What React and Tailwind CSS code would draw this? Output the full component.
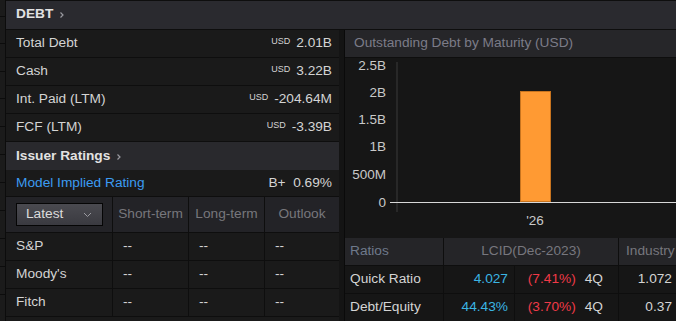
import React from 'react';

const debtRows = [
  { label: 'Total Debt', value: '2.01B' },
  { label: 'Cash', value: '3.22B' },
  { label: 'Int. Paid (LTM)', value: '-204.64M' },
  { label: 'FCF (LTM)', value: '-3.39B' },
];

const agencies = ["S&P", "Moody's", 'Fitch'];

const ratios = [
  { name: 'Quick Ratio', value: '4.027', chg: '(7.41%)', ind: '1.072' },
  { name: 'Debt/Equity', value: '44.43%', chg: '(3.70%)', ind: '0.37' },
];

// y axis ticks for the maturity chart
const ticks = [
  { label: '2.5B', y: 7 },
  { label: '2B', y: 34 },
  { label: '1.5B', y: 61 },
  { label: '1B', y: 88 },
  { label: '500M', y: 116 },
  { label: '0', y: 144 },
];

const Chevron = () => (
  <svg width="6" height="8" viewBox="0 0 6 8" className="ml-[6px] mt-[1px]">
    <path d="M1.5 1.5 L4 4 L1.5 6.5" stroke="#9a9aa0" strokeWidth="1.2" fill="none" />
  </svg>
);

const MaturityChart = () => (
  <svg width="331" height="180" viewBox="0 0 331 180" className="overflow-visible">
    <line x1="52" y1="4" x2="52" y2="154" stroke="#3a3a3a" strokeWidth="1" />
    {ticks.map(t => (
      <text key={t.label} x="41" y={t.y + 5} textAnchor="end" fill="#c9c9c9" fontSize="13.5" fontFamily="Liberation Sans, Arial, sans-serif">
        {t.label}
      </text>
    ))}
    <rect x="175.5" y="33.5" width="30" height="110" fill="#ff9a33" stroke="#c8741f" strokeWidth="1" />
    <line x1="45" y1="144.5" x2="331" y2="144.5" stroke="#d8d8d8" strokeWidth="1" />
    <text x="190" y="167" textAnchor="middle" fill="#c9c9c9" fontSize="13.5" fontFamily="Liberation Sans, Arial, sans-serif">'26</text>
  </svg>
);

export default function App() {
  return (
    <div className="w-[676px] h-[321px] bg-[#141414] flex overflow-hidden text-[13.7px] text-[#d4d4d4] font-['Liberation_Sans',Arial,sans-serif]">
      {/* neighbouring panel edge */}
      <div className="w-[7px] flex flex-col bg-[#1b1b1b]">
        {[17, 27, 28, 27, 28, 28, 28, 28, 28, 28, 28].map((h, i) => (
          <div key={i} className="border-b border-[#0c0c0c]" style={{ height: h }} />
        ))}
      </div>

      <div className="flex-1 flex flex-col border-l border-[#0c0c0c]">
        <div className="h-[30px] shrink-0 bg-[#2a2a2f] border-t border-b border-[#0e0e0e] flex items-center pl-[10px] pb-[1px] text-[#e2e2e2] font-bold">
          DEBT
          <Chevron />
        </div>

        <div className="flex flex-1">
          {/* left column */}
          <div className="w-[333px] flex flex-col bg-[#1a1a1a]">
            {debtRows.map(r => (
              <div key={r.label} className="h-[28px] flex items-center justify-between pl-[10px] pr-[7px] border-b border-[#0e0e0e]">
                <span>{r.label}</span>
                <span className="flex items-baseline">
                  <span className="text-[9px] mr-[6px] relative -top-[3px]">USD</span>
                  {r.value}
                </span>
              </div>
            ))}

            <div className="h-[28px] bg-[#29292d] flex items-center pl-[10px] text-[#e2e2e2] font-bold">
              Issuer Ratings
              <Chevron />
            </div>
            <div className="h-[27px] flex items-center justify-between pl-[10px] pr-[7px] border-b border-[#0e0e0e]">
              <span className="text-[#3c9cf2]">Model Implied Rating</span>
              <span>B+&nbsp;&nbsp;0.69%</span>
            </div>

            <div className="h-[36px] flex bg-[#232327] border-b border-[#0e0e0e]">
              <div className="w-[107px] flex items-center pl-[10px] border-r border-[#0e0e0e]">
                <div className="w-[87px] h-[23px] flex items-center justify-between pl-[9px] pr-[10px] border border-[#050505] bg-gradient-to-b from-[#4a4a50] to-[#3a3a40] text-[#dcdcdc]">
                  Latest
                  <svg width="9" height="6" viewBox="0 0 9 6">
                    <path d="M1 1 L4.5 4.5 L8 1" stroke="#9a9aa0" strokeWidth="1" fill="none" />
                  </svg>
                </div>
              </div>
              {['Short-term', 'Long-term', 'Outlook'].map((h, i) => (
                <div key={h} className={`${i === 2 ? 'flex-1' : 'w-[76px] border-r border-[#0e0e0e]'} flex items-center justify-center text-[#77777c] whitespace-nowrap`}>
                  {h}
                </div>
              ))}
            </div>

            {agencies.map(a => (
              <div key={a} className="h-[28px] flex border-b border-[#0e0e0e]">
                <div className="w-[107px] flex items-center pl-[10px] border-r border-[#0e0e0e]">{a}</div>
                <div className="w-[76px] flex items-center pl-[10px] border-r border-[#0e0e0e]">--</div>
                <div className="w-[76px] flex items-center pl-[10px] border-r border-[#0e0e0e]">--</div>
                <div className="flex-1 flex items-center pl-[10px]">--</div>
              </div>
            ))}
          </div>

          {/* right column */}
          <div className="flex-1 ml-[5px] flex flex-col bg-[#161616] border-l border-[#0a0a0a]">
            <div className="h-[28px] bg-[#262629] flex items-center pl-[9px] text-[#7c7c88] border-b border-[#0e0e0e] whitespace-nowrap">
              Outstanding Debt by Maturity (USD)
            </div>
            <div className="h-[180px]">
              <MaturityChart />
            </div>
            <div className="h-[28px] flex bg-[#252528] border-b border-[#0e0e0e] text-[#77777e]">
              <div className="w-[99px] flex items-center pl-[5px] text-[#6f7a8c] border-r border-[#0e0e0e]">Ratios</div>
              <div className="w-[175px] flex items-center justify-center border-r border-[#0e0e0e]">LCID(Dec-2023)</div>
              <div className="flex-1 flex items-center pl-[7px] whitespace-nowrap">Industry</div>
            </div>
            {ratios.map(r => (
              <div key={r.name} className="h-[28px] flex border-b border-[#0e0e0e]">
                <div className="w-[99px] flex items-center pl-[5px] border-r border-[#0e0e0e] whitespace-nowrap">{r.name}</div>
                <div className="w-[71px] flex items-center justify-end pr-[6px] text-[#3bb5e3] border-r border-[#0e0e0e]">{r.value}</div>
                <div className="w-[104px] flex items-center justify-end pr-[15px] border-r border-[#0e0e0e]">
                  <span className="text-[#f03a48] mr-[9px]">{r.chg}</span>
                  4Q
                </div>
                <div className="flex-1 flex items-center justify-end pr-[4px]">{r.ind}</div>
              </div>
            ))}
          </div>
        </div>
      </div>
    </div>
  );
}
